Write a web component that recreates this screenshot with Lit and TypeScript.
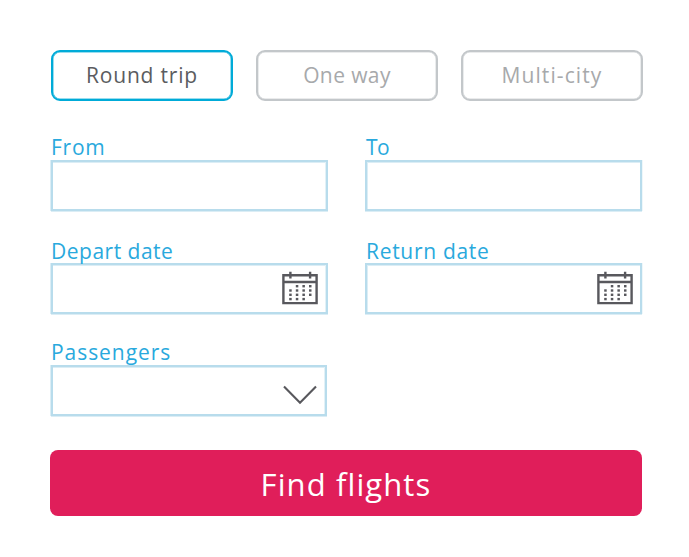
import { LitElement, html, css, svg } from "lit";
import { customElement, property } from "lit/decorators.js";

const calendarDots = [
  [1, 2, 3],
  [0, 1, 2, 3],
  [0, 1, 2, 3],
  [0, 1, 2],
];

@customElement("calendar-icon")
class CalendarIcon extends LitElement {
  static styles = css`
    :host { display: block; width: 36px; height: 34px; }
    svg { display: block; }
    .line { fill: none; stroke: #58585d; stroke-width: 2.4; }
    .dot { fill: #58585d; }
  `;
  render() {
    return html`<svg width="36" height="34" viewBox="0 0 36 34">
      <path class="line" d="M1.4 4.2H34.6V32.1H1.4ZM1.4 11H34.6M8.4 0.7V7.5M28.1 0.7V7.5" />
      ${calendarDots.map((cols, r) =>
        cols.map((c) => svg`<rect class="dot" x=${7.2 + c * 6.6} y=${14 + r * 4.3} width="2.5" height="2.4" />`)
      )}
    </svg>`;
  }
}

@customElement("form-field")
class FormField extends LitElement {
  @property() label = "";
  @property() icon = "";
  static styles = css`
    :host { display: block; }
    .label {
      box-sizing: border-box; display: block; height: 26px; line-height: 26px;
      padding: var(--drop, 0) 0 0 var(--indent, 0);
      font-size: 21px; color: #29a9dd; white-space: nowrap; letter-spacing: var(--track, 0.5px);
    }
    .box {
      box-sizing: border-box; height: 51px;
      border: 2px solid #b8dcec; background: #fff;
      box-shadow: var(--edge, -1px 0 #dbedf5, inset -1px 0 #e2f1f7), 0 1px #dbedf5, inset 0 1px #dbedf5;
      display: flex; justify-content: flex-end; padding: 6px var(--inset, 8px) 0 0;
    }
    .chevron { display: block; margin: 12px 0 0; fill: none; stroke: #58585d; stroke-width: 2.1; }
  `;
  render() {
    return html`<span class="label">${this.label}</span>
      <div class="box">
        ${this.icon === "calendar" ? html`<calendar-icon></calendar-icon>` : ""}
        ${this.icon === "chevron"
          ? html`<svg class="chevron" width="34" height="20" viewBox="0 0 34 20"><path d="M1 1.5L17 17.8L33 1.5" /></svg>`
          : ""}
      </div>`;
  }
}

@customElement("app-root")
class AppRoot extends LitElement {
  static styles = css`
    :host {
      display: block; box-sizing: border-box; width: 689px; height: 557px;
      padding: 50px 46px 0 51px; background: #fff; font-family: "Open Sans", sans-serif;
    }
    button { font-family: inherit; font-weight: 400; margin: 0; }
    .tabs { display: grid; grid-template-columns: repeat(3, 182px); column-gap: 23px; }
    .tab {
      box-sizing: border-box; height: 51px; padding: 0 0 2px; border: 2px solid #c3c7ca; border-radius: 9px;
      background: #fff; color: #a7a9ab; font-size: 21px; letter-spacing: 0.4px;
      box-shadow: inset 0 0 0 0.5px #d5d8da;
    }
    .wide { letter-spacing: 1.1px; }
    .active { color: #5b5c60; border-color: #00abd8; box-shadow: inset 0 0 0 0.5px #35bce0; letter-spacing: 0.8px; }
    .fields { display: grid; grid-template-columns: 277px 277px; column-gap: 37px; padding-top: 33px; }
    .from { --track: 0.75px; }
    .to { --track: -0.5px; }
    .right { --inset: 7px; --indent: 1px; --edge: inset 1px 0 #dbedf5, 1px 0 #eef7fa; }
    .dates { margin-top: 26px; --drop: 1px; }
    .return { --track: 0.7px; }
    .passengers { margin-top: 25px; width: 276px; --drop: 0; --track: 0.95px; }
    .search {
      display: block; width: 592px; height: 66px; margin: 34px 0 0 -1px; padding: 2px 0 0;
      border: 0; border-radius: 8px; background: #e01e5a; color: #fff; font-size: 31px; letter-spacing: 1.1px;
    }
  `;
  render() {
    return html`<div class="tabs">
        <button class="tab active">Round trip</button>
        <button class="tab">One way</button>
        <button class="tab wide">Multi-city</button>
      </div>
      <div class="fields">
        <form-field class="from" label="From"></form-field>
        <form-field class="to right" label="To"></form-field>
        <form-field class="dates" label="Depart date" icon="calendar"></form-field>
        <form-field class="dates return right" label="Return date" icon="calendar"></form-field>
        <form-field class="passengers" label="Passengers" icon="chevron"></form-field>
      </div>
      <button class="search">Find flights</button>`;
  }
}
